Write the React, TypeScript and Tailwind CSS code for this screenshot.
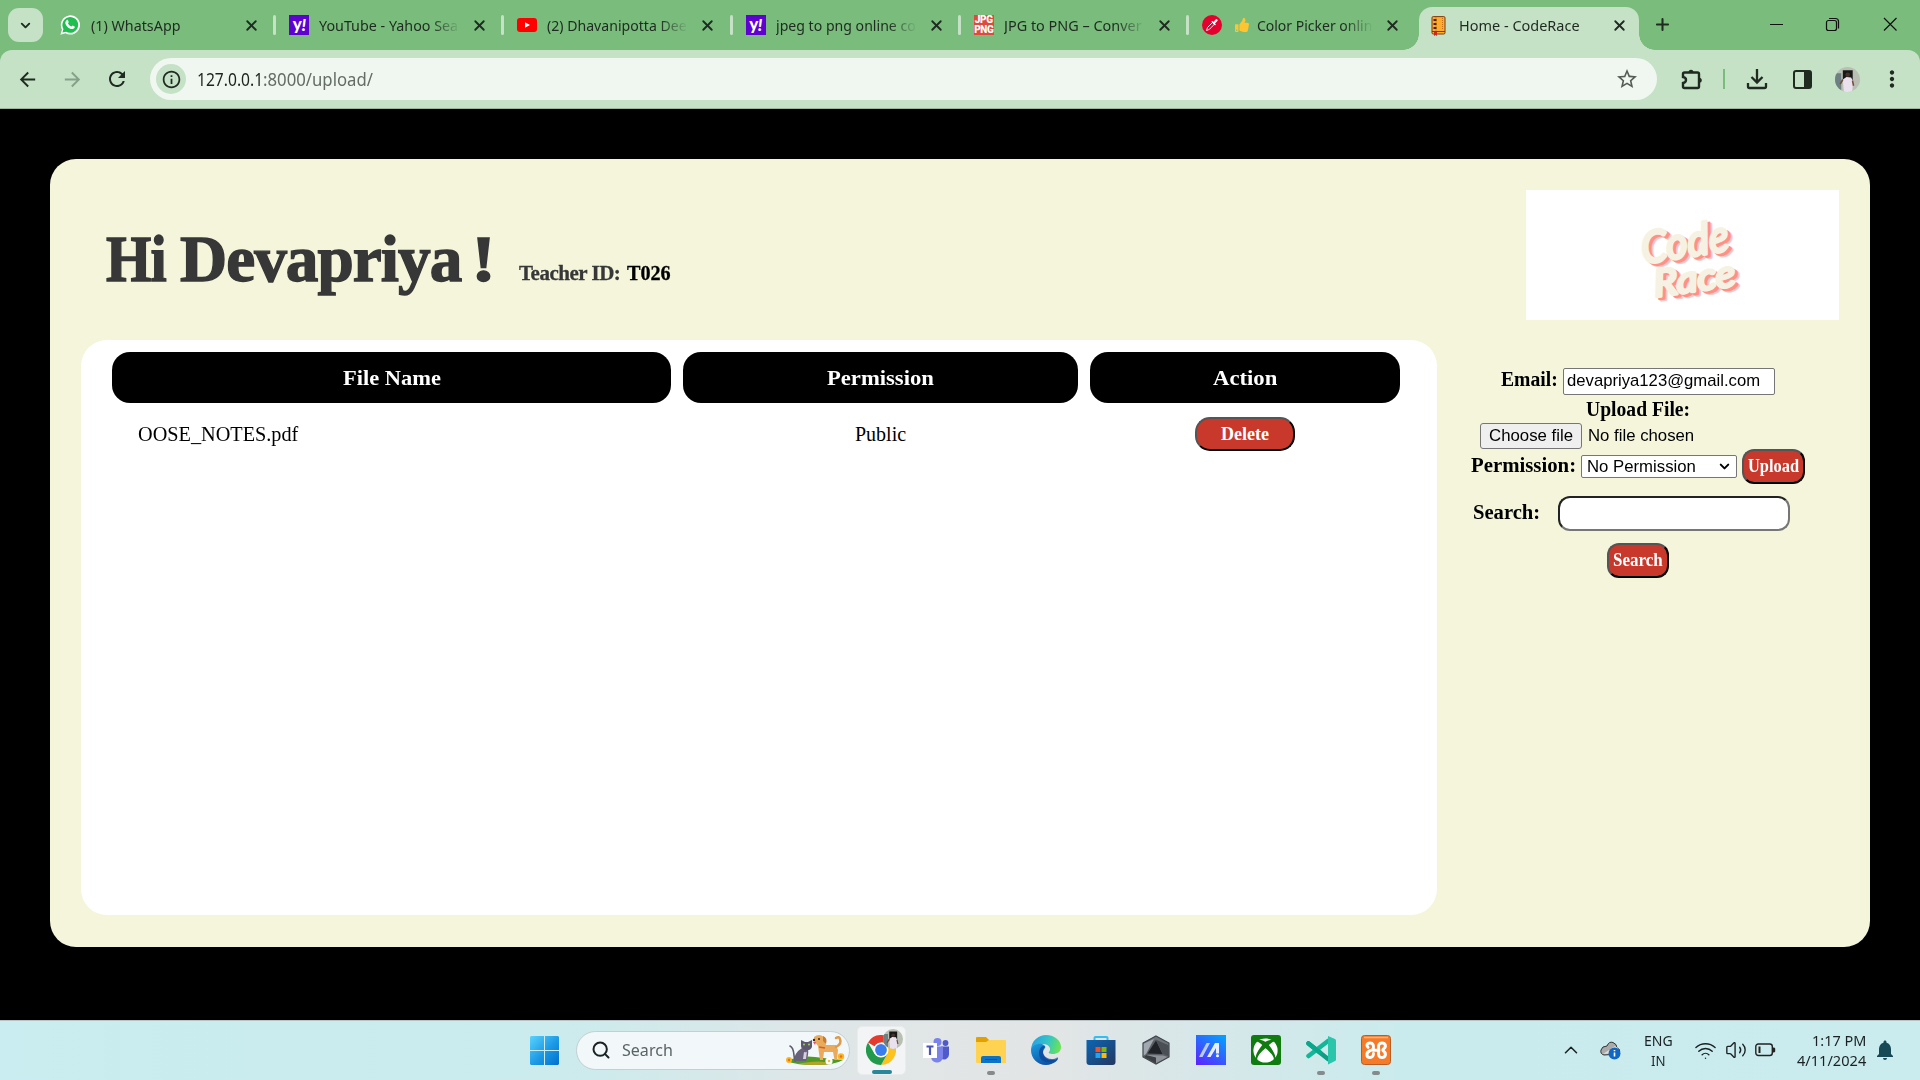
import React, { useLayoutEffect, useRef, useState } from "react";
import { MdArrowBack, MdArrowForward, MdRefresh, MdInfoOutline, MdStarBorder, MdMoreVert, MdNotifications } from "react-icons/md";
import { FaThumbsUp, FaXbox } from "react-icons/fa";
import { ChevronDown, ChevronUp, Search, Wifi, Volume2, X, Plus } from "lucide-react";

/** Sets a single line of text to an exact width. */
function Fit({ w, className = "", children }: { w: number; className?: string; children: React.ReactNode }) {
  const ref = useRef<HTMLSpanElement>(null);
  const [scale, setScale] = useState(1);
  useLayoutEffect(() => {
    if (ref.current) setScale(w / ref.current.offsetWidth);
  }, [w]);
  return (
    <span className={`inline-flex shrink-0 ${className}`} style={{ width: w }}>
      <span ref={ref} className="shrink-0 origin-left whitespace-pre" style={{ transform: `scaleX(${scale})` }}>
        {children}
      </span>
    </span>
  );
}

const WhatsAppIcon = () => (
  <svg width="20" height="20" viewBox="0 0 20 20" className="-ml-px">
    <path d="M0.4 19.7 2 14.6A9.6 9.6 0 1 1 5.5 18.2Z" fill="#fff" />
    <path d="M2.4 17.6 3.5 14A7.9 7.9 0 1 1 6.2 16.7Z" fill="#1fbf4f" />
    <path d="M6.6 5.2c.5-.5 1.2-.4 1.4.1l.7 1.6c.1.4-.7 1-.7 1.4.5 1.300 1.900 2.700 3.400 3.200.5 0 .9-1 1.400-.9l1.700.9c.5.2.3 1-.1 1.500-1.100 1.400-3 1.300-4.700.4-2-1-3.500-2.700-4.200-4.500-.5-1.400.2-2.900 1.100-3.700Z" fill="#fff" />
  </svg>
);

const YahooIcon = () => (
  <span className="flex size-5 items-center justify-center bg-[#5f01d1] font-['Lato'] text-[17px] leading-none font-black tracking-[-0.5px] text-white">
    <span className="-mt-1">y</span>
    <span className="-mt-0.5 italic">!</span>
  </span>
);

const YouTubeIcon = () => (
  <svg width="20" height="20" viewBox="0 0 20 20">
    <rect x="0" y="3" width="20" height="14" rx="3" fill="#f00" />
    <path d="M8 7.200v5.600l5-2.800z" fill="#fff" />
  </svg>
);

const JpgIcon = () => (
  <span className="flex size-5 flex-col items-center justify-center bg-[#dc4b3e] font-['Roboto'] text-[10px] font-black tracking-[-0.4px] text-white">
    <span className="h-[10px] leading-[10px]">JPG</span>
    <span className="h-[10px] leading-[10px]">PNG</span>
  </span>
);

const PickerIcon = () => (
  <svg width="20" height="20" viewBox="0 0 20 20">
    <circle cx="10" cy="10" r="10" fill="#e5002e" />
    <path d="M4.500 15.500 5.500 12.500 10.500 7.500 12.300 9.300 7.500 14.300Z" fill="none" stroke="#fff" strokeWidth="0.900" />
    <path d="M10.300 6.800 13 9.500" stroke="#fff" strokeWidth="1.500" strokeLinecap="round" />
    <path d="M12 8 14.500 5.300" stroke="#fff" strokeWidth="2.300" strokeLinecap="round" />
  </svg>
);

const BookIcon = () => (
  <svg width="16" height="20" viewBox="0 0 16 20">
    <rect x="1" y="0.600" width="13" height="17.400" rx="1.200" fill="#ffab2e" stroke="#7b3b10" />
    <path d="M1 15.500h13" stroke="#7b3b10" />
    <path d="M5 1v14" stroke="#cf7415" strokeWidth="0.700" />
    <path d="M11.500 2v12" stroke="#b55e13" strokeWidth="0.800" strokeDasharray="1 1" />
    <path d="M2.500 4h3M2.500 8h3M2.500 12h3" stroke="#4e230b" strokeWidth="2" />
    <path d="M3 16v4l1.500-1 1.500 1v-4z" fill="#c92a1c" />
  </svg>
);

const tabs = [
  { icon: <WhatsAppIcon />, title: "(1) WhatsApp", w: 90 },
  { icon: <YahooIcon />, title: "YouTube - Yahoo Sea", w: 139, fade: true },
  { icon: <YouTubeIcon />, title: "(2) Dhavanipotta Dee", w: 140, fade: true },
  { icon: <YahooIcon />, title: "jpeg to png online co", w: 140, fade: true },
  { icon: <JpgIcon />, title: "JPG to PNG – Conver", w: 138, fade: true },
  { icon: <PickerIcon />, title: "Color Picker onlin", w: 115, fade: true, thumb: true },
];

function TabStrip() {
  return (
    <div className="flex h-[50px] bg-[#79bc7c] pl-2 font-['Noto_Sans'] text-[14px] text-[#1f2a20]">
      <div className="mt-2 flex h-[34px] w-[35px] items-center justify-center rounded-[11px] bg-[#c5e1c6]">
        <ChevronDown size={15} strokeWidth={3} />
      </div>
      <div className="flex pl-[5px]">
        {tabs.map((t, i) => (
          <div key={i} className="flex h-[50px] w-[228.200px] items-center pl-[13px]">
            <span className="flex w-[30px]">{t.icon}</span>
            <span
              className={
                t.fade
                  ? "flex w-[151px] items-center overflow-hidden [mask-image:linear-gradient(90deg,#000_112px,transparent_141px)]"
                  : "flex w-[151px] items-center"
              }
            >
              {t.thumb && <FaThumbsUp size={14} className="mr-[8px] ml-[3px] shrink-0 text-[#ffc531]" />}
              <Fit w={t.w}>{t.title}</Fit>
            </span>
            <X size={17} strokeWidth={2.600} className="ml-px" />
            <span className={i < 5 ? "ml-auto h-5 w-[3px] rounded-full bg-[#c5e1c6]" : "hidden"} />
          </div>
        ))}
      </div>
      <div className="relative mt-[7px] ml-[2px] flex w-[220px] items-center rounded-t-[13px] bg-[#c5e1c6] pb-[7px] pl-3">
        <span className="absolute bottom-0 -left-4 size-4 bg-[radial-gradient(circle_at_0_0,transparent_15.500px,#c5e1c6_16px)]" />
        <span className="absolute -right-4 bottom-0 size-4 bg-[radial-gradient(circle_at_100%_0,transparent_15.500px,#c5e1c6_16px)]" />
        <span className="mt-[2px] w-[28px]"><BookIcon /></span>
        <Fit w={121}>Home - CodeRace</Fit>
        <X size={17} strokeWidth={2.600} className="ml-[31px]" />
      </div>
      <Plus size={19} strokeWidth={2.600} className="mt-[15px] ml-[14px]" />
      <svg width="130" height="16" viewBox="0 0 130 16" className="mt-4 ml-[97px]" fill="none" stroke="#111" strokeWidth="1.200">
        <path d="M1 8.500h13M115 2l12.500 12.500M127.500 2l-12.500 12.500" />
        <rect x="57.500" y="4.500" width="10" height="10" rx="2" />
        <path d="M60 2.500h6.500a3 3 0 0 1 3 3v7" />
      </svg>
    </div>
  );
}

const Avatar = ({ size }: { size: number }) => (
  <svg width={size} height={size} viewBox="0 0 24 24">
    <clipPath id="avatarClip"><circle cx="12" cy="12" r="12" /></clipPath>
    <g clipPath="url(#avatarClip)">
      <path d="M0 0h24v24H0z" fill="#b9bfb3" />
      <path d="M0 6h6v18H0z" fill="#6d7f82" />
      <path d="M7.500 3h9.500v11H7.500z" fill="#161a17" />
      <path d="M8.500 24 7.500 12l3.500-2.500 4.500.5 2 4-1 10z" fill="#e9e2ee" />
      <circle cx="12.200" cy="7.500" r="2.200" fill="#4a3029" />
      <path d="M7.500 12 5 16.500M16.800 13l1 5" stroke="#744c3c" strokeWidth="1.500" />
    </g>
  </svg>
);

const ExtensionIcon = () => (
  <svg width="22" height="22" viewBox="0 0 22 22" className="ml-[24px]">
    <path d="M3.500 4.500h13q1.500 0 1.500 1.500v12.500q0 1.500-1.500 1.500h-13Q2 20 2 18.500V15q3-.5 3-3T2 9V6q0-1.500 1.500-1.500Z" fill="none" stroke="#1f2a20" strokeWidth="2.400" />
    <path d="M7.500 4.500a2.500 2.800 0 0 1 5 0zM18 9.800a2.800 2.500 0 0 1 0 5z" fill="#1f2a20" />
  </svg>
);

const DownloadIcon = () => (
  <svg width="22" height="22" viewBox="0 0 22 22" className="ml-[21px]" fill="none" stroke="#1f2a20" strokeWidth="2.300">
    <path d="M11 1v13M5.500 9l5.500 5.500L16.500 9M2 15v3.500Q2 20 3.500 20h15q1.500 0 1.500-1.500V15" />
  </svg>
);

function Toolbar() {
  return (
    <div className="bg-[#79bc7c]">
      <div className="flex h-[59px] items-center rounded-t-[12px] border-b border-[#9fb5a0] bg-[#c5e1c6] text-[#1f2a20]">
        <MdArrowBack size={23} className="ml-[16px]" />
        <MdArrowForward size={23} className="ml-[22px] text-[#85a187]" />
        <MdRefresh size={24} className="ml-[21px]" />
        <div className="ml-[21px] flex h-[42px] w-[1507px] items-center rounded-full bg-[#f0f7f0] pl-[6px] font-['Noto_Sans'] text-[17.500px]">
          <span className="flex size-[30px] items-center justify-center rounded-full bg-[#c5e1c6]">
            <MdInfoOutline size={21} />
          </span>
          <Fit w={66} className="ml-[11px] text-[#1d241e]">127.0.0.1</Fit>
          <Fit w={110} className="text-[#646c66]">:8000/upload/</Fit>
          <MdStarBorder size={24} className="ml-auto mr-[18px] text-[#555c56]" />
        </div>
        <ExtensionIcon />
        <span className="ml-[20px] h-5 w-[2px] bg-[#79bc7c]" />
        <DownloadIcon />
        <span className="ml-[25px] h-[19px] w-[19px] rounded-[3px] border-[2.500px] border-r-[8px] border-[#1f2a20]" />
        <span className="ml-[23px]"><Avatar size={25} /></span>
        <MdMoreVert size={26} className="ml-[19px]" />
      </div>
    </div>
  );
}

const Logo = () => (
  <svg width="313" height="130" viewBox="0 0 313 130" className="bg-white font-['Lato'] italic" strokeLinejoin="round" strokeLinecap="round">
    {[
      { d: 4.800, c: "#ffc9c5" },
      { d: 3, c: "#ff9088" },
      { d: 0, c: "#f6f2e3" },
    ].map((l) => (
      <g key={l.d} transform={`translate(${l.d} ${l.d * 0.7})`} fill={l.c} stroke={l.c} strokeWidth="3.200" fontWeight="400">
        <text transform="translate(117 74) rotate(-9) skewX(-2)" fontSize="44" textLength="88" lengthAdjust="spacingAndGlyphs">Code</text>
        <text transform="translate(129 107) rotate(-8) skewX(-2)" fontSize="37" textLength="82" lengthAdjust="spacingAndGlyphs">Race</text>
      </g>
    ))}
  </svg>
);

const redButton =
  "flex items-center justify-center border-2 border-t-[#555] border-l-[#555] border-r-black border-b-black bg-[#c8382b] font-['Liberation_Serif'] text-[18px] font-bold text-white";

function Page() {
  return (
    <main className="h-[911px] bg-black px-[50px] pt-[50px] text-black">
      <div className="flex h-[788px] rounded-[26px] bg-[#f5f5dc] pl-[31px]">
        <section className="w-[1356px]">
          <header className="flex h-[181px] items-baseline pt-[61px] pl-[25px] font-['Liberation_Serif'] font-bold text-[#373737]">
            <h1 className="flex text-[66px] leading-[78px] tracking-[-1px] [-webkit-text-stroke:1.400px_#373737]">
              <Fit w={60}>Hi</Fit>
              <Fit w={281} className="ml-[14px]">Devapriya</Fit>
              <Fit w={24} className="ml-[10px]">!</Fit>
            </h1>
            <Fit w={101} className="ml-[24px] -translate-y-px text-[22px] tracking-[-0.5px] [-webkit-text-stroke:0.300px_#373737]">Teacher ID:</Fit>
            <Fit w={44} className="ml-[7px] -translate-y-px text-[22px] text-black [-webkit-text-stroke:0.300px_#000]">T026</Fit>
          </header>
          <div className="h-[575px] rounded-[26px] bg-white px-[31px] pt-3 font-['Liberation_Serif']">
            <div className="grid grid-cols-[559px_395px_310px] gap-x-3">
              {[["File Name", 98], ["Permission", 107], ["Action", 64]].map(([h, w]) => (
                <div key={h} className="flex h-[51px] items-center justify-center rounded-[18px] bg-black text-[22px] font-bold text-white">
                  <Fit w={w as number}>{h}</Fit>
                </div>
              ))}
              <div className="flex h-[61px] items-center pl-[26px] text-[20px]"><Fit w={160}>OOSE_NOTES.pdf</Fit></div>
              <div className="flex items-center justify-center text-[20px]"><Fit w={51}>Public</Fit></div>
              <div className="flex items-center justify-center pt-px">
                <button className={`${redButton} h-[34px] w-[100px] rounded-[15px]`}><Fit w={48}>Delete</Fit></button>
              </div>
            </div>
          </div>
        </section>
        <aside className="w-[433px] pt-[31px] font-['Liberation_Serif'] text-[20px] font-bold">
          <div className="ml-[89px] h-[130px]"><Logo /></div>
          <div className="mt-[48px] flex h-[27px] items-center pl-[64px]">
            <Fit w={57} className="-mt-[5px]">Email:</Fit>
            <div className="ml-[5px] flex h-[27px] w-[212px] items-center rounded-[2px] border border-[#767676] bg-white pl-[3px] font-['Liberation_Sans'] text-[16.600px] font-normal"><Fit w={193}>devapriya123@gmail.com</Fit></div>
          </div>
          <div className="flex h-[28px] items-center pl-[149px]"><Fit w={104}>Upload File:</Fit></div>
          <div className="flex h-[26px] items-center pl-[43px] font-['Liberation_Sans'] text-[16.600px] font-normal">
            <button className="flex h-[26px] w-[102px] items-center justify-center rounded-[3px] border border-[#767676] bg-[#efefef]"><Fit w={84}>Choose file</Fit></button>
            <Fit w={106} className="ml-[6px]">No file chosen</Fit>
          </div>
          <div className="flex h-[35px] items-center pl-[34px]">
            <Fit w={105} className="-mt-[3px]">Permission:</Fit>
            <div className="ml-[5px] flex h-[23px] w-[156px] items-center justify-between rounded-[2px] border border-[#767676] bg-white pr-[4px] pl-[5px] font-['Liberation_Sans'] text-[16.600px] font-normal">
              <Fit w={109} className="pt-px">No Permission</Fit>
              <ChevronDown size={15} strokeWidth={3.200} />
            </div>
            <button className={`${redButton} ml-[5px] h-[35px] w-[63px] rounded-[12px]`}><Fit w={51}>Upload</Fit></button>
          </div>
          <div className="mt-3 flex h-[35px] items-center pl-[36px]">
            <Fit w={67} className="-mt-[3px]">Search:</Fit>
            <div className="ml-[18px] h-[35px] w-[232px] rounded-[12px] border-2 border-t-[#222] border-r-[#767676] border-b-[#767676] border-l-[#222] bg-white" />
          </div>
          <div className="mt-3 pl-[170px]"><button className={`${redButton} h-[35px] w-[62px] rounded-[12px]`}><Fit w={50}>Search</Fit></button></div>
        </aside>
      </div>
    </main>
  );
}

const PetsIcon = () => (
  <svg width="60" height="32" viewBox="0 0 60 32">
    <path d="M2 27Q15 21 30 23T58 26Q50 31 30 31T2 27Z" fill="#4f9a24" />
    <path d="M12 30q18 2 36 0-12-5-36 0Z" fill="#b4a42a" />
    <path d="M10 27C8 21 10 14 5 12" fill="none" stroke="#5f5a6d" strokeWidth="1.600" strokeLinecap="round" />
    <path d="M9 27q0-8 8-13l6 1q1 6-2 12Z" fill="#67617a" />
    <path d="M16 6l4 2h3l4-2v7q-2 4-6 3-5-1-5-4Z" fill="#5d5770" />
    <path d="M19 18q3 1 3-1l-1 8h-3z" fill="#d6cfe0" />
    <circle cx="19" cy="10.500" r="0.900" fill="#a9e05a" /><circle cx="24" cy="10.500" r="0.900" fill="#a9e05a" />
    <path d="M29 3q5-4 10 0l2 8h10l2 5-1 10h-2.500l-1.500-8-9 0-1 8h-3l-2-14-4-5Z" fill="#e9ab5b" />
    <path d="M51 13q6-3 4-8-1-3-4-1" fill="none" stroke="#dd9a4b" strokeWidth="2.500" strokeLinecap="round" />
    <path d="M38 2q5 2 3 8l-3-3z" fill="#c67a32" /><path d="M34 13l6 1" stroke="#d95c2d" strokeWidth="1.500" />
    <circle cx="34" cy="5" r="1" fill="#34231a" /><circle cx="29" cy="6" r="1.200" fill="#34231a" />
    <path d="M28 8l2 3 1-3z" fill="#e8506c" />
    <circle cx="4" cy="26" r="3" fill="#fbb522" /><circle cx="4" cy="26" r="1.200" fill="#e4721c" />
    <circle cx="56" cy="22.500" r="3.200" fill="#fbb522" /><circle cx="56" cy="22.500" r="1.200" fill="#e4721c" />
    <circle cx="44" cy="27" r="3.600" fill="#fff" /><circle cx="44" cy="27" r="1.300" fill="#f5c32c" />
  </svg>
);

const WindowsIcon = () => (
  <svg width="29" height="29" viewBox="0 0 29 29">
    <defs><linearGradient id="win" gradientUnits="userSpaceOnUse" x1="0" y1="0" x2="29" y2="29"><stop stopColor="#58d3ff" /><stop offset="0.550" stopColor="#1b98e4" /><stop offset="1" stopColor="#0070ce" /></linearGradient></defs>
    <path d="M1 0h13v14H0V1zM15 0h13l1 1v13H15zM0 15h14v14H1l-1-1zM15 15h14v13l-1 1H15z" fill="url(#win)" />
  </svg>
);

const ChromeIcon = () => (
  <svg width="30" height="30" viewBox="0 0 30 30" className="-ml-px">
    <path d="M15 15 2 7.500A15 15 0 0 1 28 7.500H15Z" fill="#e33b2e" />
    <path d="M15 15 21.500 18.700 15 30A15 15 0 0 0 28 7.500H15Z" fill="#fcc31e" />
    <path d="M2 7.500A15 15 0 0 0 15 30L21.500 18.700 8.500 18.800Z" fill="#229a4b" />
    <circle cx="15" cy="15" r="7.500" fill="#fff" /><circle cx="15" cy="15" r="5.900" fill="#3b7ded" />
  </svg>
);

const TeamsIcon = () => (
  <svg width="28" height="26" viewBox="0 0 28 26">
    <circle cx="15.500" cy="5" r="4" fill="#7b83eb" /><circle cx="23.500" cy="6" r="2.900" fill="#5059c9" />
    <path d="M19 9.500h8v8a5 5 0 0 1-8 4z" fill="#5059c9" />
    <path d="M8 9.500h13v9a6 6 0 0 1-12 2z" fill="#7b83eb" />
    <path d="M1 6h14v15H1z" fill="#fff" />
    <path d="M4.500 9.500h7M8 9.500V18" stroke="#4b53bc" strokeWidth="2.200" />
  </svg>
);

const FolderIcon = () => (
  <svg width="30" height="28" viewBox="0 0 30 28">
    <path d="M0 2q0-1 1-1h9l3 3v4H0z" fill="#e2a100" />
    <path d="M0 6h10l3-2h16q1 0 1 1v22H1q-1 0-1-1z" fill="#ffd251" />
    <path d="M5 27v-5q0-2 2-2h16q2 0 2 2v5z" fill="#0b73c8" />
    <path d="M9 23.500h12" stroke="#0a4e8c" />
  </svg>
);

const EdgeIcon = () => (
  <svg width="30" height="30" viewBox="0 0 30 30">
    <defs>
      <linearGradient id="edgeTop" x1="0" y1="0.300" x2="1" y2="0.500"><stop stopColor="#279ee4" /><stop offset="0.550" stopColor="#34c5c5" /><stop offset="1" stopColor="#6be353" /></linearGradient>
      <linearGradient id="edgeBottom" x1="0" y1="0" x2="0.600" y2="1"><stop stopColor="#1a9ce0" /><stop offset="1" stopColor="#0c50a4" /></linearGradient>
    </defs>
    <path d="M0 16C0 5 8 0 15 0c9 0 15 6 15 12 0 5-4 7-8 7-3 0-5-1-4-2 3-3 0-8-6-8C5 9 1 12 0 16Z" fill="url(#edgeTop)" />
    <path d="M0 15C1 10 7 8 11 9c3 1 4 3 3 4-5 5 0 13 8 12 3 0 4-2 5-2 1 1-4 7-12 7C6 30 0 23 0 15Z" fill="url(#edgeBottom)" />
    <path d="M8 18c0-5 4-9 6-6-5 5 0 13 8 12 3 0 4-2 5-2-5 8-19 7-19-4Z" fill="#0c4696" opacity="0.750" />
  </svg>
);

const StoreIcon = () => (
  <svg width="30" height="30" viewBox="0 0 30 30">
    <defs><linearGradient id="store" x1="0" y1="0" x2="1" y2="1"><stop stopColor="#0c66b4" /><stop offset="1" stopColor="#243760" /></linearGradient></defs>
    <path d="M8.500 7V3q0-1 1-1h11q1 0 1 1v4" fill="none" stroke="#35bdf3" strokeWidth="2" />
    <path d="M.5 5h29v22q0 3-3 3h-23q-3 0-3-3z" fill="url(#store)" />
    <path d="M9.500 12H14.500v5h-5z" fill="#f25022" /><path d="M15.500 12h5v5h-5z" fill="#7fba00" />
    <path d="M9.500 18h5v5h-5z" fill="#1fa5f0" /><path d="M15.500 18h5v5h-5z" fill="#ffb900" />
  </svg>
);

const CrateIcon = () => (
  <svg width="28" height="30" viewBox="0 0 28 30">
    <path d="M14 1 27 8v14L14 29 1 22V8Z" fill="#5b6066" />
    <path d="M14 1 27 8v3L14 4.500 1 11V8Z" fill="#6d737b" />
    <path d="M1 9 12 4 4 19 1 21Z" fill="#a3a9b0" />
    <path d="M14 5.500 20.500 19 5.500 18.500Z" fill="#202327" />
    <path d="M14 5 26 10v11l-5.500-2.500Z" fill="#4a4f55" />
    <path d="M4 20l17 .5 5 1.500-12 6.500L2 22Z" fill="#8d9298" /><path d="M4 20l10 2.500v6L2 22Z" fill="#3a3e43" />
    <path d="M14 1 27 8v14L14 29 1 22V8Z" fill="none" stroke="#43484e" strokeWidth="1.200" />
  </svg>
);

const MyAsusIcon = () => (
  <svg width="30" height="30" viewBox="0 0 30 30">
    <defs><linearGradient id="asus" x1="0.100" y1="1" x2="0.800" y2="0"><stop stopColor="#5b24ff" /><stop offset="1" stopColor="#079cff" /></linearGradient></defs>
    <path d="M0 0h30v30H0z" fill="url(#asus)" />
    <path d="M3 22 10.500 8H14L6.500 22z" fill="#b9ccff" />
    <path d="M11 22 19 8h4v10.500h-3V13L14.500 22z" fill="#e6efff" />
    <circle cx="21.500" cy="20.700" r="1.500" fill="#fff" />
  </svg>
);

const CodeEditorIcon = () => (
  <svg width="30" height="30" viewBox="0 0 30 30">
    <path d="M2.500 8.500 22 24" stroke="#0c9d83" strokeWidth="4.500" strokeLinecap="round" />
    <path d="M2.500 21 22 6" stroke="#13b698" strokeWidth="4.500" strokeLinecap="round" />
    <path d="M2.500 8.500 14 17.500" stroke="#0ba78b" strokeWidth="4.500" strokeLinecap="round" />
    <path d="M22 1 29 4q1 .5 1 1.500v19q0 1-1 1.500l-7 3.500z" fill="#2bc5ab" />
  </svg>
);

const XboxIcon = () => (
  <span className="flex size-[30px] items-center justify-center rounded-[3px] bg-[#107c10]"><FaXbox size={25} className="text-white" /></span>
);

const XamppIcon = () => (
  <svg width="30" height="30" viewBox="0 0 30 30">
    <rect x="0.500" y="0.500" width="29" height="29" rx="3" fill="#f57b28" stroke="#b85d24" />
    <path d="M3 2.500h24" stroke="#f9b48a" strokeWidth="1.500" />
    <path
      d="M12 15.200H18M12.300 14.500C13 10 12 8 9 8 6 8 5 10.500 7 12.300M17.700 14.500C17 10 18 8 21 8c3.500 0 4.500 3.500 2 5.500-1.500 1-1.500 2 0 3 2.500 2 1.500 6-2 6-3 0-4-2.500-3.300-6M12.300 13.500Q11 15.500 8.500 16C5 17.500 5 22.500 9 22.500c3 0 3.300-1.500 3.500-4"
      fill="none" stroke="#fff" strokeWidth="3" strokeLinejoin="round" strokeLinecap="round"
    />
  </svg>
);

const apps = [
  { icon: <TeamsIcon /> },
  { icon: <FolderIcon />, open: true },
  { icon: <EdgeIcon /> },
  { icon: <StoreIcon /> },
  { icon: <CrateIcon /> },
  { icon: <MyAsusIcon /> },
  { icon: <XboxIcon /> },
  { icon: <CodeEditorIcon />, open: true },
  { icon: <XamppIcon />, open: true },
];

function Taskbar() {
  return (
    <footer className="flex h-[60px] items-center border-t border-[#b9c3c5] bg-[linear-gradient(90deg,#c9edf0_0%,#cbebed_29%,#dfe6e7_43%,#e3e5e5_54%,#d6e7e9_63%,#caebed_73%,#caecee_100%)] pb-px pl-[530px] font-['Noto_Sans'] text-[#1b2223]">
      <WindowsIcon />
      <div className="ml-[17px] flex h-[39px] w-[274px] items-center rounded-full border border-[#c3cfd1] bg-[#f2f8f9] pl-[14px]">
        <Search size={20} strokeWidth={2.400} />
        <Fit w={51} className="ml-[11px] text-[17px] text-[#5a6365]">Search</Fit>
        <span className="mr-[4px] ml-auto"><PetsIcon /></span>
      </div>
      <div className="relative ml-[7px] flex size-[49px] items-center justify-center rounded-[5px] border border-[#e8eced] bg-[#f2f4f5]">
        <ChromeIcon />
        <span className="absolute top-[2px] right-[2px]"><Avatar size={20} /></span>
        <span className="absolute bottom-0 h-1 w-5 rounded-full bg-[#29879a]" />
      </div>
      <div className="ml-[2px] flex">
        {apps.map((a, i) => (
          <div key={i} className="relative flex h-[49px] w-[55px] items-center justify-center">
            {a.icon}
            {a.open && <span className="absolute bottom-0 h-1 w-2 rounded-full bg-[#858b8c]" />}
          </div>
        ))}
      </div>
      <ChevronUp size={22} strokeWidth={1.700} className="ml-[157px]" />
      <svg width="22" height="20" viewBox="0 0 22 20" className="ml-[18px]">
        <path d="M4 15q-4-1-3-5t6-4Q9 1 13 2.500 17 4 17 8q4 1 2 6Z" fill="#aaa" stroke="#333" />
        <path d="M3 14 15 6q4 2 4 7z" fill="#ddd" /><circle cx="14.500" cy="13.500" r="6" fill="#1068c3" />
        <path d="M14.500 12.500v4M14.500 10v1.300" stroke="#fff" strokeWidth="1.600" />
      </svg>
      <div className="ml-[20px] flex w-[32px] flex-col items-center text-[15px] leading-5">
        <Fit w={29}>ENG</Fit>
        <Fit w={15}>IN</Fit>
      </div>
      <Wifi size={23} strokeWidth={1.500} className="ml-[20px]" />
      <Volume2 size={22} strokeWidth={1.500} className="ml-[8px]" />
      <svg width="21" height="14" viewBox="0 0 21 14" className="ml-[8px]">
        <rect x="0.800" y="1" width="16.500" height="11.500" rx="2.500" fill="none" stroke="#222" strokeWidth="1.400" />
        <path d="M3.500 3.500h2v6.500h-2zM18 4.500h1.200l1 1v3l-1 1H18z" fill="#222" />
      </svg>
      <div className="ml-[21px] flex w-[69px] flex-col items-end text-[15px] leading-5">
        <Fit w={54}>1:17 PM</Fit>
        <Fit w={69}>4/11/2024</Fit>
      </div>
      <MdNotifications size={24} className="ml-[7px] text-[#174855]" />
    </footer>
  );
}

export default function App() {
  return (
    <div className="h-[1080px] w-[1920px] overflow-hidden bg-black">
      <TabStrip />
      <Toolbar />
      <Page />
      <Taskbar />
    </div>
  );
}
